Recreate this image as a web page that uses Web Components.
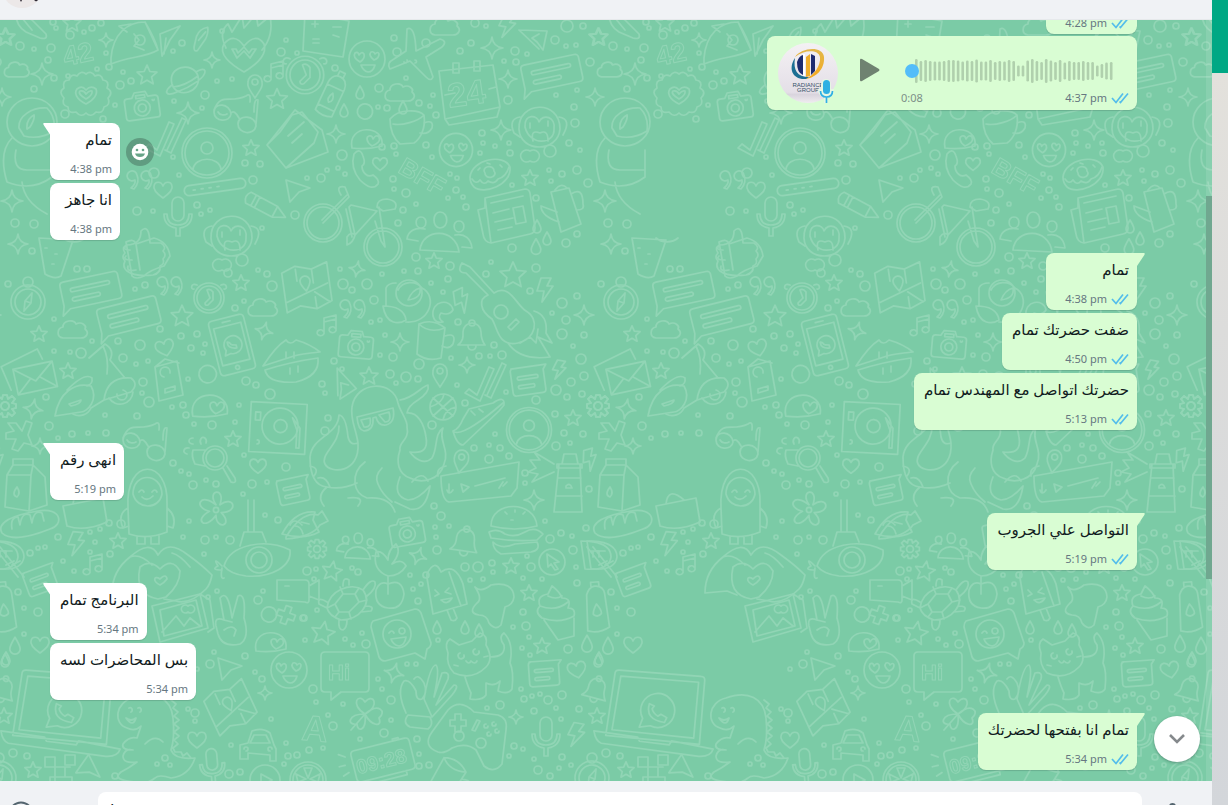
<!DOCTYPE html>
<html lang="en">
<head>
<meta charset="utf-8">
<meta name="viewport" content="width=device-width, initial-scale=1">
<title>Chat</title>
<style>
html,body{margin:0;height:100%;overflow:hidden}
body{font-family:"Noto Sans","Open Sans","DejaVu Sans",sans-serif;color:#111b21}
</style>
</head>
<body>
<chat-app>
  <chat-header slot="header"></chat-header>
  <chat-thread>
    <chat-message dir-out time="4:28 pm" grouped></chat-message>
    <voice-message></voice-message>
    <chat-message tail time="4:38 pm" react>تمام</chat-message>
    <chat-message grouped time="4:38 pm">انا جاهز</chat-message>
    <chat-message dir-out tail time="4:38 pm">تمام</chat-message>
    <chat-message dir-out grouped time="4:50 pm">ضفت حضرتك تمام</chat-message>
    <chat-message dir-out grouped time="5:13 pm">حضرتك اتواصل مع المهندس تمام</chat-message>
    <chat-message tail time="5:19 pm">انهى رقم</chat-message>
    <chat-message dir-out tail time="5:19 pm">التواصل علي الجروب</chat-message>
    <chat-message tail time="5:34 pm">البرنامج تمام</chat-message>
    <chat-message grouped time="5:34 pm">بس المحاضرات لسه</chat-message>
    <chat-message dir-out tail time="5:34 pm">تمام انا بفتحها لحضرتك</chat-message>
  </chat-thread>
  <chat-composer slot="footer"></chat-composer>
</chat-app>
<script>
const mount = (el, html) => { el.attachShadow({mode:'open'}).innerHTML = html; };

customElements.define('chat-app', class extends HTMLElement{
  constructor(){ super(); mount(this, `<style>
    :host{display:grid;grid-template-columns:minmax(0,1fr) 16px;height:100vh}
    main{display:flex;flex-direction:column;min-height:0}
    ::slotted(chat-thread){flex:1;min-height:0}
    aside{display:flex;flex-direction:column}
    .bar{height:73px;background:#00a884}
    .rest{flex:1;background:linear-gradient(#e3e1dc,#dcdcdb 35%,#d3d6da)}
  </style><main><slot name="header"></slot><slot></slot><slot name="footer"></slot></main>
  <aside><div class="bar"></div><div class="rest"></div></aside>`); }
});

customElements.define('chat-header', class extends HTMLElement{
  constructor(){ super(); mount(this, `<style>
    :host{display:flex;align-items:flex-end;height:20px;overflow:hidden;background:#f0f2f5;box-sizing:border-box;border-bottom:1px solid #e6e9eb;padding:0 2px}
    svg{flex:none;margin-bottom:11px}
  </style><svg width="40" height="40" viewBox="0 0 40 40" aria-hidden="true"><circle cx="20" cy="20" r="20" fill="#ece8e8"/><path d="M17 30l2 4 2-4zM32 32l2 1.500 3-2z" fill="#2b2630"/></svg>`); }
});

/* Outline shapes of the wallpaper, each centred on its own origin. */
const S = {
  star:'M0-9L2.600-3.200 9-2.600 4.200 1.800 5.600 8 0 4.800-5.600 8-4.200 1.800-9-2.600-2.600-3.200Z',
  spark:'M0-10Q1-1 10 0Q1 1 0 10Q-1 1-10 0Q-1-1 0-10Z',
  heart:'M0 8C-7 3-10-1-9-4C-8-9-2-9 0-4C2-9 8-9 9-4C10-1 7 3 0 8Z',
  drop:'M0-6C3-1 4 1 4 3A4 4 0 0 1-4 3C-4 1-3-1 0-6Z',
  cloud:'M-10 8C-17 7-16-2-10-3C-10-10 1-11 3-6C9-9 14-4 12-1C17 3 13 8 8 8Z',
  bolt:'M-4-12H6L2-4H8L-3 12L-1 1H-8Z',
  bubble:'M-26-15H28Q32-15 32-11V10Q32 14 28 14H-24L-33 20L-30 10V-11Q-30-15-26-15ZM-18-7H20A2 2 0 0 1 20-3H-18A2 2 0 0 1-18-7ZM-18 3H8A2 2 0 0 1 8 7H-18A2 2 0 0 1-18 3Z',
  note:'M-14-12H18L15-8V10Q15 13 12 13H-12Q-15 13-15 10V-9Q-15-12-12-12M-8-4H8A1.500 1.500 0 0 1 8-1H-8A1.500 1.500 0 0 1-8-4ZM-8 4H4A1.500 1.500 0 0 1 4 7H-8A1.500 1.500 0 0 1-8 4Z',
  cam:'M-14-9H-9L-6-14H5L7-9H14Q17-9 17-6V10Q17 13 14 13H-14Q-17 13-17 10V-6Q-17-9-14-9ZM-5-11H4V-8H-5ZM8 2A8 8 0 1 1-8 2A8 8 0 1 1 8 2ZM4 2A4 4 0 1 1-4 2A4 4 0 1 1 4 2ZM13-5A1 1 0 1 1 11-5',
  clock:'M15 0A15 15 0 1 1-15 0A15 15 0 1 1 15 0ZM12 0A12 12 0 1 1-12 0A12 12 0 1 1 12 0ZM-2-8L1 0L-4 5Q-4 8-1 7L4 2V-6Q1-10-2-8ZM-12-13C-18-16-19-8-15-9M12-13C18-16 19-8 15-9',
  smile:'M18 0A18 18 0 1 1-18 0A18 18 0 1 1 18 0ZM-7 3C-12 0-14-3-12-6Q-9-8-8-4Q-5-8-3-5C-2-2-4 1-7 3ZM7 1C3-2 2-5 4-7Q7-8 8-5Q11-8 12-5C12-2 10 0 7 1ZM-6 6H8Q6 13 1 13Q-4 12-6 6Z',
  pin:'M0 12C-5 4-8 1-7-4A7 7 0 0 1 7-4C8 1 5 4 0 12ZM3-4A3 3 0 1 1-3-4A3 3 0 1 1 3-4Z',
  music:'M-4 6V-8L8-11V3M-4-4L8-7M-4 6A3.500 3 0 1 1-6 4ZM8 3A3.500 3 0 1 1 6 1Z',
  quotes:'M-9 8Q-4 4-5 0A5 5 0 1 1-3-5Q0 2-6 9ZM5 8Q10 4 9 0A5 5 0 1 1 11-5Q14 2 8 9Z',
  gear:'M-2-11H2L3-7L7-10L10-7L7-3L11-2V2L7 3L10 7L7 10L3 7L2 11H-2L-3 7L-7 10L-10 7L-7 3L-11 2V-2L-7-3L-10-7L-7-10L-3-7ZM4 0A4 4 0 1 1-4 0A4 4 0 1 1 4 0Z',
  bell:'M-14 9C-8 4-9 0-9-4A9 9 0 0 1 9-4C9 2 10 5 13 9ZM-4 10A4 4 0 0 0 4 10M3-13A3 3 0 1 1-3-13A3 3 0 1 1 3-13Z',
  mic:'M-6-9A6 6 0 0 1 6-9V3A6 6 0 0 1-6 3ZM-11 2Q-11 13 0 13Q11 13 11 2M-14 2Q-14 14-2 16V24H2V16Q14 14 14 2M-14 2H-11M11 2H14',
  profile:'M25 0A25 25 0 1 1-25 0A25 25 0 1 1 25 0ZM22 0A22 22 0 1 1-22 0A22 22 0 1 1 22 0ZM6-5A6 6 0 1 1-6-5A6 6 0 1 1 6-5ZM-14 16C-12 3 12 3 14 16',
  person:'M-6-29A7 7 0 0 1 2-16A7 7 0 0 1-6-29ZM-15 14C-20-10 18-10 15 12Q0 16-15 14ZM5 12C-1 8-1 3 2 2Q5 1 6 5Q9 0 12 3C14 7 10 10 5 12Z',
  people:'M0-20C9-20 9-4 0-4C-8-4-8-20 0-20ZM-19-15C-12-15-13-4-19-4C-25-4-26-15-19-15ZM19-11C26-11 25 0 19 0C13 0 12-11 19-11ZM-20 18C-18-4 16-5 19 20ZM-22 9L-33 7C-32-1-25-5-15-3M22 15L32 16C31 7 25 1 15 3',
  plane:'M-14-10L14-9L10 10L4 2L-1-2L6-6M-14-10L6 9',
  cursor:'M-12-10L12-2L1 2L-8 12Z',
  compass:'M17 0A17 17 0 1 1-17 0A17 17 0 1 1 17 0ZM13 0A13 13 0 1 1-13 0A13 13 0 1 1 13 0ZM4-9L3 1L-4 9L-3-1ZM-3-1L3 1M5-20A5 5 0 1 1-5-20A5 5 0 1 1 5-20Z',
  phone:'M-14-28H14Q18-28 18-24V24Q18 28 14 28H-14Q-18 28-18 24V-24Q-18-28-14-28ZM-14-20H14V18H-14ZM-4-24H4M2 23A2 2 0 1 1-2 23A2 2 0 1 1 2 23ZM-9 9L-7 4A9 9 0 1 1-3 8ZM-4-4Q-5 3 4 4L4 1L1 0Q-1 0-2-3Z',
  map:'M-22-18L-8-23L8-18L24-23V16L8 22L-8 17L-22 22ZM-22 12L22-2M8 5L22 17M0 3C-3-1-5-4-5-7A5 5 0 0 1 5-7C5-4 3-1 0 3ZM-8-20V-8M8 10V22M8-18V-4',
  planet:'M-13 4C-18-14 8-19 13-4C17 12-8 20-13 4ZM-13 5C-22 12-19 17-8 12C6 7 21-3 20-9C19-12 14-10 11-8M-12 7Q0 6 13-4',
  badge:'M0-20Q5-24 9-18Q15-21 17-14Q24-13 21-6Q28-2 22 4Q25 11 18 13Q17 20 10 18Q5 24 0 19Q-5 24-10 18Q-18 20-18 13Q-25 11-22 4Q-28-2-22-6Q-24-14-17-14Q-15-21-9-18Q-5-24 0-20ZM0 10C-10 5-12-1-9-5Q-4-9 0-4Q5-9 10-5C12 0 8 6 0 10ZM0 5C-5 2-8-1-6-3Q-2-4 0 0Q3-4 6-3Q7 1 0 5Z',
  glasses:'M-22 0C-22-10-6-9-5 2C-6 11-22 10-22 0ZM2 12C2 2 20 3 20 14C18 24 2 22 2 12ZM-5 1Q-2-3 3 6M-22-2C-15-20-6-8 10-16Q15-20 14-10M20 12L22-12Q18-14 18 0M-18 0A6 5 0 0 0-9 2',
  rocket:'M-26 16C-24-8-10-20 8-20C14-10 18-3 21 8C8 16-8 14-26 22ZM-10-10L-18-16L-6-18M8-20L21 8M-3-8L2-2L-3 4L7 8M8-2A5 5 0 1 1-2-2A5 5 0 1 1 8-2Z',
  astro:'M-25 0A25 24 0 1 1 25 0A25 24 0 1 1-25 0ZM-13 6C-14-6 0-15 15-14Q24-5 22 9Q8 18-8 14ZM-5 7Q-6-3 2-7Q3-3-2 5ZM-20 16Q-34 30-25 60Q0 70 20 55V28M-16 28Q-20 48-5 48H20M-10 60Q-8 80 15 92',
  envelope:'M-20-12H20V14H-20ZM-20-12L0 4L20-12M-20 14L-5 1M20 14L5 1M-26 8L-31-17L8-27L11-16',
  bigmail:'M-23 5L5-30L32-10L38 12L-4 28ZM-23 5L-10-8L2-25L12-28L28-8L24 3L-4 28M-2-4L14-18M2 3L12-6',
  pill:'M-26-5H26A5 5 0 0 1 26 5H-26A5 5 0 0 1-26-5ZM-22 0H-20M-14 0H-12M-6 0H-4M2 0H4',
  pencil:'M-20-6H10L22 0L10 6H-20Q-25 0-20-6ZM-14-6V6M-10-6V6M10-6V6',
  thumb:'M-18 0Q-4 0-4-14Q4-22 5-2H16Q22 2 18 6Q22 10 18 14Q20 19 15 21Q16 28 8 30Q-10 32-18 26Q-23 22-20 16Q-24 12-20 8Q-24 2-18 0Z',
  monkey:'M-19 2C-20-26 22-28 22 2C20 26-18 26-19 2ZM-13 0C-14-14 0-12 1-5C5-14 18-10 16 2C17 17-8 20-13 0ZM-8-4V1M10-6V-1M-5 14Q-8 2 2 6Q10 2 10 14M-18-10Q-30-8-24 6L-18 10M21-10Q34-8 25 8M-8 24A6 6 0 1 1-8 34A6 6 0 1 1-8 24ZM12 18A6 6 0 1 1 12 30A6 6 0 1 1 12 18Z',
  airplane:'M-13-26Q-5-30-4-4L20-16Q28-14 22-8L6 2L13 22Q11 27 6 22L-10 6L-30 14Q-34 8-26 4L-14-4ZM-13 5A1.500 1.500 0 1 1-16 7M-5 5A1.500 1.500 0 1 1-5 8',
  calendar:'M-28-22L26-28L33 14L30 24L-18 32L-22 26ZM-22 26L33 14M-22 2L-12 0M-14-30H-8V-20H-14ZM7-32H13V-22H7ZM22-4L29-6',
  cup:'M-20-8C-12-18 8-18 14-12C16 2 10 12 4 16L-10 17C-18 10-20 0-20-8ZM-17-3C-8-1 8-6 13-11M14-4Q24-8 22 1Q18 8 10 6',
  bottle:'M-9-16Q-6-24 0-24Q8-24 9-16L11 18Q0 24-11 20ZM-4-24V-28H4V-24M0-6Q5 1 4 4Q0 8-4 4Q-4 0 0-6Z',
  tube:'M-9-10Q-8-20 0-20Q8-20 9-10V20Q0 24-9 20ZM-3-20V-25H3V-20M-9-8H9M-9 14H9M0-2Q5 5 0 8Q-4 5 0-2Z',
  call:'M-14-14Q-8-21-5-12Q-2-4-6-2C-6 5 0 10 5 7Q12 12 10 16Q4 24-8 12Q-18 0-14-14Z',
  donut:'M-20 4C-18-14 14-20 20-6C22 12-6 22-16 14Q-20 10-20 4ZM-18 6Q-14 12-10 7Q-6 13-2 8Q4 12 8 6Q16 4 19-6M-5 0A5 4 0 1 1 4-2A5 4 0 1 1-5 0M-12-3L-10-5M10-8L12-6M-3-10L0-9',
  bike:'M-13 6A19 19 0 1 1-51 6A19 19 0 1 1-13 6ZM-16 6A16 16 0 1 1-48 6A16 16 0 1 1-16 6ZM47 30A19 19 0 1 1 9 30A19 19 0 1 1 47 30ZM44 30A16 16 0 1 1 12 30A16 16 0 1 1 44 30ZM-32 6L-6-20L-10-30Q-20-32-14-22M-33 3L-8-22M-4-12L22-6L0 18L-6-10ZM-9-8L-3 20M24-10L30 30L26 24L20 4M22-10Q22-18 32-18Q44-16 40-8L28-6ZM-8 20Q-4 14 0 18Q-2 26-8 28Z',
  paper:'M-18-20L22-29Q26-29 27-25L32 10Q32 15 27 16L-12 25Q-19 24-20 16L-25-8L-18-10ZM-18-20L-12 25M-12-15L20-22M-10-5L6-9M-8 4L10 0M-5 12L9 9M10-10L20-12L23 4L13 6Z',
  can:'M-14-18L4-22L16 14L-4 22ZM-10-20Q-4-28 2-22M6-16Q18-24 18-6Q20 0 12 0M-8 2L-24-4Q-24 6-6 12',
  fist:'M-22-16Q-14-20-12-14L6-20Q20-16 22-2L16 8Q2 12-4 18Q-12 22-16 18ZM-22-12Q-26-8-18-8M-22-2Q-26 2-16 2M-20 8Q-22 14-12 12M-12-14L-8 12',
  fries:'M-16-20L18-18L6 18Q0 22-10 16ZM-10-10H-8M0-4H2M-3 6H-1M8-20A14 10 0 0 0 30-20',
  scooter:'M-40 30C-36 6-20-4-4 0C4 14-8 26-14 26ZM-28 4Q-10-14-3-8Q-2-2-8 0M-22 28A13 13 0 0 0-4 22M9 14Q12-10 36-8Q44-2 36 6L9 14ZM14 12A13 13 0 0 0 38 6M22 8A5 5 0 1 0 28 4M-4 22L9 14M12-12Q14-28 8-40L-6-28L10-42Q20-36 15-26L30-8M-26 18L-14 14Q-14 18-24 20Z',
  lips:'M-27 8Q-14-12-4-18Q0-12 6-18Q20-14 30-6Q10-4 4-2ZM-25 12Q0 4 28 0Q30 18 6 24Q-22 26-25 12ZM-4 0V-6M4 0V-6M0 10V16M8 8V14',
  card:'M-14-14L8-20L14 14L-10 20ZM-14-14L-4-22L10-18M-5-4A5 5 0 1 1 1-8M-4 8L6 5V9L-4 12Z',
  turntable:'M-28-24H28V26H-28ZM20-1A18 18 0 1 1-16-1A18 18 0 1 1 20-1ZM9-1A6 6 0 1 1-4-1A6 6 0 1 1 9-1ZM-23-14H-18V-6H-23ZM-20 14A2 2 0 1 1-20 18M14-10L22 0V20H19V2Z',
  spin:'M-12-12H-4L2-4L6-14L12-12L8 0L12 10L4 8L-2 16L-8 14L-4 4L-14 4L-14-2L-6-4Z',
  magnify:'M12 0A12 12 0 1 1-12 0A12 12 0 1 1 12 0ZM9 0A9 9 0 1 1-9 0A9 9 0 1 1 9 0ZM8 10L16 24Q22 26 20 20L12 8M-10-8L-22-8Q-24-2-20 6L-10 8M-22-14A4 3 0 1 1-22-20M-14-14A3 4 0 1 1-9-15M-28-4A4 3 0 1 1-26-10',
  carton:'M-18-12L-12-22H8L20-10L22 18L4 24L-20 20ZM-18-12H6L4 24M6-12L8-22M-12-22V-28H8V-22M-8 0Q-4 6-8 10Q-14 8-8 0Z',
  penguin:'M-19 16C-22-36 22-34 20 12V40Q0 48-18 42ZM-14 2C-14-20 14-20 15 2C12 18-10 18-14 2ZM-8 0Q-5-4-3 0M5 0Q8-4 10 0M-5 5Q0 10 6 4M-19 16Q-30 22-24 36L-18 34M20 16Q30 24 26 36L20 34M-10 44V52H-2V45M4 45V52H12V43',
  flower:'M0-4C-8-16 8-18 3-4C14-12 18 2 4 2C14 12 0 16 0 4C-8 16-18 8-5 1C-18-2-12-14 0-4ZM2 0A2 2 0 1 1-2 0A2 2 0 1 1 2 0Z',
  bird:'M-22-4V-14Q-20-19-12-19M-10-12A14 13 0 0 1 14-14C30-6 22 22-2 20M14-9A13 13 0 1 1-12-9A13 13 0 1 1 14-9ZM-25 4C-22 24-8 22-2 18Q-4 4-25 4ZM-22-4V4M0-2Q4-12 12-14Q14-4 0-2Z',
  croissant:'M-10 4C-12-12 8-14 10-2Q6 4-2 1Q-6 6 0 10Q-8 12-10 4Z',
  guitar:'M-50-62L-42-58L-18-32C-2-42 4-20 14-14C28-6 24 14 6 18C-14 22-14 4-20-6C-32-14-34-26-24-30L-46-52Q-56-52-50-62ZM-4-13A7 7 0 1 1-18-13A7 7 0 1 1-4-13ZM-4 2L4-6L7-3L-1 5ZM22-14Q36-10 34 8L40 18L26 12L38 32Q8 36-4 18M8 18L18 12L24 18L26 4',
  mug:'M-14-16Q0-22 12-12L8 18Q-6 22-16 14ZM-14-16Q-4-6 12-12M12-4Q24-8 20 4Q16 10 9 6',
  ticks:'M-20 8L-16 4L-8 10L4-18L9-16L-5 16ZM2 10L17-22L21-20L6 13L0 10',
  ball:'M13 0A13 13 0 1 1-13 0A13 13 0 1 1 13 0ZM-10-9L10 9M10-9L-10 9M-13 0Q0-4 1-13M0 13Q2 2 13 0',
  shoe:'M-26 6Q-20 4-16-6L-10-16L14-22Q26-30 25-20L20-14L-16 20Q-22 20-26 6ZM-26 6Q-18 14 24-22M-8-14L-4-10M0-16L4-13',
  octopus:'M-20 3C-22-12-28-20-26-33C-22-60 16-60 20-37C22-28 30-20 29-13C32 0 20 2 22 10C18 22 20 34 32 38C44 44 62 40 66 24C72 10 60 0 65-12C56-6 60 8 54 18C46 26 36 18 32 12C46 14 50 8 48-3C46-16 40-28 29-27Q30-34 40-40Q52-48 50-55C44-54 36-42 22-40M-20 3Q-28 6-30-3Q-32-24-39-25C-40-4-66-4-68 17C-68 34-64 46-51 47Q-36 50-21 43M-39-14C-38 4-58 14-53 24C-48 34-18 34-20 3M22 37Q14 56 30 60Q40 60 52 46Q48 72 32 69L17 62M-13 22Q-24 30-23 43Q-22 54-11 58Q12 56 17 72M4 28Q-4 36 0 44Q4 54 14 62M-51 47Q-62 56-54 66M-30 58Q-12 56-20 66M-21-23L15-32Q18-18 8-15Q0-14-2-23L-5-22Q-4-10-14-9Q-20-10-21-23ZM-17-20L-8-22Q-6-12-14-13ZM1-25L11-28Q14-18 7-18ZM-60 38Q-52 36-48 47M-68 26Q-58 28-64 36M60 36Q58 28 68 26M34 42Q44 30 50 41',
  voice:'M-38-14L40-28L38-2L32 6L-30 12Q-38 10-38-14ZM-30-6V2M-32 0Q-30 6-26 0M-18-6L-10-3L-16 2ZM-4-4L26-12M20-2L24-8M24-4L28-8',
  light:'M-9-18H12L14 30H-14ZM-11-18H14V-14H-11ZM-6-18L-4-28H8L10-18M-10-4H13M-12 14H14M-2 4Q2 0 4 6H-2ZM-14-18L-34-30L-28-22L-38-22L-32-14L-40-10L-30-8L-36 0L-14-10',
  bread:'M-28 8C-34-2-18-10 8-14C32-18 34 0 20 4C0 12-20 16-28 8ZM-18 4Q-20-8-12-8L-10 0Q-8-14 0-10L2-2Q4-16 12-12L14-4',
  bag:'M-22-6L18-14L22 10Q0 20-18 14ZM-12-8Q-10-26 6-12',
  leaf:'M-14-16Q16-16 16 0Q14 14-10 12ZM-8-10L16 20M-4-6H4M-2 0V-6M4 8L12 4',
  hands:'M-48 18Q-48-4-30-18Q-10-36-2-20Q8-36 28-20Q42-10 52 0Q50 10 46 14Q30 30 16 26L4 24M-20-8Q-10-16 0-6Q12-18 20-4Q20 10 6 22L-2 24Q-26 20-20-8ZM0 10C-8 6-6 0 0 4Q6-2 7 4Q4 8 0 10ZM-30-18Q-20-22-8-10M12-22Q20-20 30-8M-48 18L-26 16L-16 20',
  sub:'M-34 6C-28-16 8-22 32-10C34 6 14 18-12 16Q-28 14-34 6ZM14 0A13 13 0 1 1-12 0A13 13 0 1 1 14 0ZM9 0A8 8 0 1 1-7 0A8 8 0 1 1 9 0ZM-18-14L-14-28H4L8-18M-10-28V-60M-4-28V-60M-36 6Q-46-4-40 6Q-48 10-36 10M-36 8Q-38 20-34 18',
  fish:'M-15 8Q-2-16 18-14L16-6L22 6Q8 14-15 8ZM-2 0Q4 0 6 8M4-4L12-2',
  picture:'M-28-14L20-26L28 8L-20 22ZM-20-10L16-20L22 6L-16 16ZM20-26L30-20L34 8L28 12M-18 12L-4-4L4 6L10-2L20 6M8-14A4 4 0 1 1 8-8A4 4 0 1 1 8-14Z',
  victory:'M-16 4Q-18-6-8-2L-12-24Q-4-34 0-4L6-26Q14-30 12-4Q18 16 8 22Q-10 26-14 12ZM-8-2L0 0M-8 8Q0 2 4 8L2 14',
  plus:'M-3-9H3V-3H9V3H3V9H-3V3H-9V-3H-3Z',
  video:'M-16-10H12Q16-10 16-6V10Q16 14 12 12L-16 10ZM16-4L26-10V10L16 6ZM-8-4H-4',
  laptop:'M-42-36Q-42-40-38-40L44-38Q48-38 48-34L46 30L-48 26ZM-36-34L42-32L40 24L-42 20ZM-60 22L-16 26L-14 30L16 32L18 28L60 34Q58 42 46 42L-52 34Q-58 32-60 22ZM-15 16L-12 7A17 17 0 1 1-4 14ZM-6-8Q-10 8 10 10L12 5L6 2L3 4Q-2 1-3-3L-1-6Z',
  dino:'M-14-12Q-20-6-28-10C-42-14-40-36-22-40C0-48 16-40 18-20Q20 0 16 12Q20 22 40 20Q34 38 16 40Q4 36 0 40Q-10 48-20 44Q-44 42-34 34Q-26 30-18 24Q-32 26-32 18Q-30 10-22 12Q-34 12-32 6Q-26-2-18 0ZM-26-30A2 2 0 1 1-24-26M-17-30A2 2 0 1 1-15-26M-29-20Q-24-16-19-20Q-22-10-29-20ZM-10 6Q0-4 8 4M16-38L21-34L18-30L23-26L19-22L24-18L19-14L24-10L19-6L24-2L19 2L23 6L18 10L20 14L26 14L28 18L32 15L36 20',
  car:'M-18 14V0L-10-2L-6-14Q4-18 12-12L16 0L18 4V16H12V10L-10 8V14ZM-8-2H12L8-10H-4ZM-14 4A2 2 0 1 1-12 6M12 6A2 2 0 1 1 14 4',
  boxes:'M-15-10H-5V0H-15ZM5-12H15V-2H5ZM-5 0H5V10H-5ZM-10 10H-5V16H-10ZM5 0H10M5 10H12V16',
  citrus:'M18 0A18 18 0 1 1-18 0A18 18 0 1 1 18 0ZM15 0A15 15 0 1 1-15 0A15 15 0 1 1 15 0ZM0-2L-4-12H4ZM2-1L12-6L10 2ZM-2-1L-12-6L-10 2ZM0 2L-6 11L6 11Z',
  play:'M15 0A15 15 0 1 1-15 0A15 15 0 1 1 15 0ZM-4-6L7 0L-4 6Z',
  whale:'M-20 12Q-4-14 12-10L16-14L22-4L14 0Q6 12-20 14ZM-4 0Q-12-8-16 0',
  burger:'M-24-4C-24-30 20-30 22-4Q0 2-24-4ZM-26 2Q-18-2-10 4Q0 8 10 2Q20-4 28 4L22 10Q0 12-24 8ZM-22 12Q-14 20 0 14L22 12Q26 20 16 22L-14 24Q-22 20-22 12ZM-10-18L-8-16M0-20V-18M8-16L10-18M-4-10H-2',
  ptr:'M13 0A13 13 0 1 1-13 0A13 13 0 1 1 13 0ZM-5-8L7 0L2 1L6 7L3 8L-1 2L-4 5Z',
  cherry:'M0 4Q-16-2-12-20Q-6-22 0-12Q0-22 8-28Q14-20 4-8Q14-14 18-6Q12 4 0 4M0 4V22M0 12Q14 6 16 22Q14 38 0 36Q-14 34-12 18Q-8 8 0 12Z',
  turtle:'M-20 6C-18-12 4-20 16-12C26 2 12 18-6 18Q-18 14-20 6ZM-12 2L-4-8L8-8L12 0L2 10L-8 10ZM-12 2L-20 6M-4-8L-7-15M8-8L12-14M12 0L20-2M2 10L4 17M-8 10L-12 15M-4-16Q-4-26 2-22L2-17M16-12Q24-24 28-20Q30-14 20-6M-8 18Q-9 28-4 28Q0 26 0 18M-20 0Q-30-6-28 2L-20 6M18 4Q28 4 24 9L14 10',
  popsicle:'M-20-18Q-12-34-6-20Q8-30 16-8L20 12L-14 22L-20-14ZM2-20L14 14M-12-2L-8 2L-12 4M2-4L-2 0L4 2M-6 8Q0 14 5 6ZM0 18L4 28Q8 30 10 26L6 16',
  splat:'M-18-20Q-12-14-2-22Q20-26 21-10Q20-2 12 0Q10 10 8 18Q2 24-4 16Q-6 8-14 8Q-26 6-16-4Q-10-8-18-20Z',
  cupcake:'M-14 6Q-22 0-16-6Q-20-16-8-18L-4-26Q4-20 6-14Q16-14 12-4Q20-4 18 4Q4 12-14 6ZM-12 8L2 28L18 24V6M-16-6Q0 0 12-10M-8-16Q0-12 6-16',
  emojibub:'M-28-14L14-26Q18-26 20-22L30 8Q30 12 26 14L24 24L14 18L-16 26Q-20 26-22 22L-30-8Q-30-12-28-14ZM10-1A14 14 0 1 1-18-1A14 14 0 1 1 10-1ZM-12-2Q-9-6-7-2M4-4A3 3 0 1 1-2-4A3 3 0 1 1 4-4ZM-10 4L5 2Q4 10-2 11Q-8 10-10 4Z',
  cat:'M-32-14Q-36-24-30-28L-21-22L-8-26L0-34Q8-32 6-22Q14-8 6 0Q-8 14-26 6Q-34-2-32-14ZM-16-12A3 3 0 1 1-20-14M-1-16A3 3 0 1 1-5-18M-14-6Q-11-2-9-6Q-5-2-3-6M-26-2L-22-1M4-10L8-11M-15 10Q-12 20-9 26L-10 32Q2 34 6 28V16Q14 20 20 14L18 24Q28 28 32 22Q34 4 30-4Q34-24 24-34Q18-30 24-22Q26-10 10-10',
  hi:'M-20-24H20Q24-24 24-20V12Q24 16 20 16H-4L-14 24V16H-20Q-24 16-24 12V-20Q-24-24-20-24Z',
  clover:'M0 0C-16-10-6-22 0-12C8-22 16-8 0 0C14-12 22-2 14 4C18 14 6 12 0 0C2 18-8 18-8 10C-18 12-18 0 0 0L-14 16',
  ok:'M-22 14Q-32-8-24-18Q-18-20-12-8Q-12 2-6 0Q0-6-4-16Q-10-26-14-20M-4 0Q2-34 8-34Q12-30 6-2L14-26Q22-28 20-20L8 6L26-14Q32-14 24-4L4 18ZM-20 16L2 18Q6 26 0 30L-18 28Q-26 24-20 16Z',
  pad:'M-32 14Q-48 8-38-6L-22-28Q-10-40 4-26L28-23Q38-20 36-8L32 26Q24 36 14 28L6 12Q-4 4-18 10Q-26 16-32 14ZM-20-18H-15V-24H-9V-18H-4V-12H-9V-6H-15V-12H-20ZM-6-2A5 5 0 1 1-16-2A5 5 0 1 1-6-2ZM16 5A5 5 0 1 1 6 5A5 5 0 1 1 16 5ZM2-8L7-18L10-17L5-7ZM18-12A2 2 0 1 1 16-14M26-14A2 2 0 1 1 24-16M29-7A2 2 0 1 1 27-9M21-4A2 2 0 1 1 19-6',
  digital:'M-26-16H26Q30-16 30-12V12Q30 16 26 16H-26Q-30 16-30 12V-12Q-30-16-26-16ZM-22 16V20H20V16M14-16V-18H20V-16M-36-12L-42-16M-38-4H-44M-36 4L-42 6',
  flame:'M-18-2Q-26-18-16-26L-12-18L-2-34L0-22L12-36L14-24L26-34Q30-14 18 0M0 22C-14 14-26 4-20-6Q-10-18 0-4Q12-18 20-6C24 6 10 16 0 22ZM-12-1L-7 8L0 1L6 8L12-1L8-1L5 3L0-3L-6 3L-8-1Z',
  brush:'M-16-14Q-8-14 0-8L14 6Q16 12 8 10L-6 4Q-16-2-16-14ZM-10-10L0 2',
  wedge:'M-6 14L-8-8L12-16L2-2ZM-4 12L-2-4',
  ticket:'M-20-20L24-12L18 24L-22 18ZM-10-12V-6M-13-9H-7M8-6H16M-12 6H-6M-12 10H-6M8 2L14 4'
};
/* name, x, y, rotation, scale percent */
const ITEMS = `star 5 37;brush 32 28;star 72 23;spark 106 40 0 70;rocket 137 42;wedge 168 42;brush 200 40 80 70;flame 244 50;spark 212 60 0 80;cloud 17 70 0 85;spark 42 74 0 110;planet 185 80;star 147 75 0 110;badge 86 94;cam 142 106 -8;glasses 236 112;music 275 72;pin 255 86;bigmail 290 140;star 277 99 0 115;spark 188 113 0 110;astro 32 122;profile 207 153;star 251 148 0 90;ticks 165 140;pill 215 187 -8;pencil 266 207 28;mic 178 212;monkey 230 236;thumb 145 245;heart 163 190;quotes 140 180;cursor 298 190;spark 12 201 0 110;spark 18 244;fries 55 258;ticket 325 33;clock 305 75 0 125;smile 367 59;airplane 420 55;cloud 445 27;bolt 507 26 10;plane 533 40;spark 492 48 0 110;spark 508 79 0 90;spark 501 130;spark 336 134 0 90;spark 595 97 0 90;star 599 37;bubble 551 74 -12 95;tube 332 95 25;drop 360 92;drop 344 110;drop 403 107;cloud 400 93;calendar 467 93;cup 410 127;person 367 134;smile 456 150 0 92;call 368 168;heart 380 164 0 80;donut 490 173;monkey 538 127;star 530 178 0 90;bike 355 217;people 440 232;paper 503 218;can 565 210;drop 537 226;drop 536 246 0 120;drop 547 238;compass 28 302;bubble 90 291 -12 95;bubble 128 317 -14 98;quotes 170 286;clock 209 298;star 241 283 0 90;star 182 316 0 120;star 39 334 0 90;star 68 371 0 90;star 233 439 0 90;cloud 263 308;cloud 73 330;phone 232 345 -14;spark 264 331 15 90;lips 290 358;map 306 288 -8;fist 148 258;scooter 95 386;envelope 35 377 -12;heart 165 348 -15;heart 258 466 0 90;card 169 381;person 210 400 0 115;turntable 278 427 3;gear 5 406;spark 33 409 10;spark 40 446 0 80;spin 20 435;glasses 145 440;magnify 215 458;carton 25 487;penguin 147 492;note 293 490 -12;flower 216 510 0 130;spark 357 269 10 80;spark 400 342 0 90;spark 467 365 0 80;spark 584 315;spark 534 500;star 434 261 0 90;star 513 275 0 145;star 369 376;star 573 418 0 90;bird 408 302;croissant 443 312;bolt 462 301 -25;bolt 545 290;bolt 559 370 10 80;bolt 590 460 -15 90;guitar 512 325;mug 433 340;bell 472 336;cam 356 345 5;music 328 326;quotes 353 309;plane 340 385 45;pin 440 375;pin 461 461 10;ticks 485 385;note 528 380 -8 110;ball 443 407;shoe 479 425;profile 529 430 0 90;gear 598 406;octopus 378 440;voice 479 490;light 568 482;bread 30 525;bag 85 512;bolt 76 544 5;star 118 541 0 90;leaf 8 557;note 40 580 -20;music 94 565;hands 160 575;sub 258 560;fish 297 526;drop 15 645 0 130;drop 5 660;heart 40 645;picture 180 620;victory 232 622;person 271 637;plus 286 615 20;video 293 590;smile 289 670;cursor 230 668;map 230 708 -25 95;spark 265 693 0 70;laptop 62 712 3;dino 155 738;heart 197 740;car 258 745;mic 212 762 -5 90;star 33 770 0 90;boxes 60 767;cursor 90 770 45;play 265 780;citrus 308 780;whale 306 525;people 358 546 0 65;gear 317 549 0 85;cam 407 532 -10;bell 465 542 8;burger 515 530;ptr 552 562;star 332 571 10 110;star 511 566 0 90;star 529 593 0 90;star 542 646 0 90;star 323 633 10 130;star 597 716 0 90;spark 418 556 20 90;spark 394 673 15;spark 516 717 0 70;cherry 388 572;turtle 347 602;popsicle 447 592;splat 493 607;cupcake 556 612;bottle 597 610 -5;emojibub 401 635;drop 437 627;drop 465 627;drop 479 630;drop 587 643 0 130;drop 599 658;cat 480 667;hi 345 676;clover 365 714;ok 428 699;pad 470 738;note 544 673 -4;heart 577 670 -12;bell 596 690 15 90;mic 546 732;bolt 576 735 10;digital 383 760 -14;mug 450 778 25;compass 592 778;leaf 595 557`;
const DOTS = `53 22 3 20 46 4 34 49 2 51 48 4 56 28 2 70 35 4 84 32 2 92 28 3 101 23 3 48 60 3 106 53 2 97 69 2 109 67 3 123 72 2 54 78 3 34 89 3 68 76 2 120 85 4 131 81 3 65 114 4 103 119 3 115 105 2 182 43 3 173 51 2 222 31 2 217 81 2 232 79 2 281 52 4 286 40 2 297 53 2 205 95 4 202 108 2 174 101 2 154 173 5 173 157 2 179 175 2 245 163 3 260 164 3 253 180 4 137 211 4 153 211 2 295 215 4 262 228 2 197 205 3 201 214 2 210 210 2 15 223 4 34 224 4 32 251 3 394 38 3 426 43 4 397 52 4 471 43 3 460 51 3 475 23 4 486 26 2 567 26 6 583 26 3 555 40 4 515 51 4 527 54 2 566 46 2 576 45 2 504 61 2 516 62 3 335 68 3 406 78 2 379 88 4 378 107 2 387 108 3 419 103 3 430 106 2 433 95 2 436 115 3 508 100 4 556 95 2 590 62 4 577 90 2 574 107 3 575 123 4 482 133 3 483 143 2 495 146 2 509 143 2 510 153 3 480 153 2 569 143 3 580 150 2 426 145 3 394 146 3 382 147 3 396 154 2 432 157 2 342 155 5 327 170 2 321 178 4 307 178 2 338 168 2 345 174 2 393 179 3 406 193 4 394 189 2 450 174 2 457 178 2 456 190 3 448 198 2 463 197 2 466 207 3 403 210 3 416 204 2 398 223 3 549 170 2 562 174 3 577 170 4 512 185 2 551 181 2 588 183 4 536 198 3 566 243 4 577 234 3 512 248 4 8 284 3 77 269 3 87 269 3 135 289 2 145 285 3 235 308 3 228 273 4 244 301 2 258 270 2 267 274 3 272 286 5 160 329 3 181 336 3 197 334 3 191 348 3 205 344 2 203 353 2 140 345 5 118 341 3 92 341 2 81 353 5 70 352 2 54 351 2 54 319 2 123 358 4 136 364 2 148 361 2 143 382 4 142 393 2 149 402 5 172 407 2 183 405 3 188 379 2 246 381 4 256 385 3 270 394 5 239 405 2 186 415 3 194 424 2 212 425 4 235 422 2 137 416 3 105 415 2 106 433 3 88 433 2 72 434 3 49 426 4 46 397 3 58 438 2 173 463 3 181 471 2 189 474 2 193 485 4 206 480 2 216 484 3 244 455 2 252 484 4 243 494 2 267 482 2 286 467 4 343 284 5 367 284 5 352 290 3 374 300 4 340 269 2 416 257 4 404 271 2 418 271 3 382 274 2 450 266 4 431 283 2 443 292 2 486 274 3 491 262 2 448 279 3 536 268 4 530 291 3 562 303 5 566 320 4 562 334 5 577 296 3 584 335 3 552 313 2 573 346 2 371 322 2 380 320 2 385 335 2 393 357 4 419 364 5 380 355 2 334 361 3 342 369 2 390 374 4 406 377 5 418 379 3 396 383 2 451 358 2 458 322 3 494 345 3 479 356 3 490 356 2 502 355 4 581 359 5 584 376 4 571 382 4 556 390 5 567 397 3 582 394 3 506 392 2 536 400 4 465 403 3 457 385 2 432 425 4 322 384 3 325 393 2 328 418 3 325 431 4 555 414 3 564 433 3 556 446 4 570 443 2 583 434 3 495 434 2 474 448 3 489 445 2 500 448 3 509 456 3 489 459 4 525 473 3 525 483 2 589 489 3 434 506 3 38 548 2 45 547 2 58 537 3 90 532 2 100 529 2 109 523 3 121 524 4 63 561 2 95 542 2 90 552 2 110 554 3 74 571 2 18 592 3 30 553 3 24 608 2 38 612 4 24 634 2 205 540 4 216 537 2 230 540 4 189 521 2 183 537 2 278 520 3 265 515 2 204 554 2 217 591 2 208 597 2 258 600 4 263 591 2 304 618 3 245 656 3 210 664 4 214 652 2 197 669 2 255 672 2 262 679 3 271 719 2 195 713 4 195 721 2 188 709 2 13 753 4 27 756 3 165 758 3 170 765 2 157 764 2 115 776 3 229 774 4 240 772 3 231 745 2 286 743 2 288 756 3 297 755 3 284 764 2 307 571 4 316 569 2 314 579 2 303 618 3 317 610 2 305 640 2 352 568 2 358 572 3 410 575 2 426 575 3 421 584 2 413 589 2 418 601 3 345 639 2 353 645 2 366 644 4 362 633 2 437 550 4 436 537 2 435 527 2 449 526 2 441 516 4 465 567 4 478 567 5 492 563 3 493 572 2 483 579 2 470 580 2 531 567 4 527 556 2 523 578 2 542 579 2 577 583 3 550 539 4 561 533 3 572 536 2 576 567 2 573 550 4 545 521 2 586 528 3 523 612 3 526 626 4 513 627 2 529 637 2 522 648 2 568 649 4 530 655 2 438 640 2 416 664 2 407 664 2 313 689 4 378 679 2 382 689 2 391 700 4 316 702 2 343 704 2 328 715 2 333 726 4 384 733 4 391 720 2 309 750 3 323 748 2 360 739 2 417 739 3 419 754 2 429 765 3 419 766 3 487 708 2 500 705 4 521 689 2 524 699 3 532 696 2 540 694 2 548 700 4 562 695 4 579 709 3 534 711 3 556 708 2 561 719 2 514 746 3 523 749 2 509 756 2 534 759 2 538 770 4 550 776 3 562 757 3 559 768 2 571 765 2`.split(' ').map(Number);

customElements.define('doodle-wallpaper', class extends HTMLElement{
  constructor(){ super();
    let tile = ITEMS.split(';').map(row => {
      const [name,x,y,r=0,s=100] = row.split(' ');
      return `<path d="${S[name]}" transform="translate(${x} ${y}) rotate(${r}) scale(${s/100})"/>`;
    }).join('');
    for(let i=0;i<DOTS.length;i+=3) tile += `<circle cx="${DOTS[i]}" cy="${DOTS[i+1]}" r="${DOTS[i+2]}"/>`;
    tile += `<g font-family="Liberation Sans" font-weight="bold" text-anchor="middle">
      <text transform="translate(80 63) rotate(-12)" font-size="27">42</text>
      <text transform="translate(468 105) rotate(-8)" font-size="34">24</text>
      <text transform="translate(418 184) rotate(30)" font-size="25">BFF</text>
      <text x="339" y="680" font-size="22">Hi</text>
      <text transform="translate(314 741) rotate(5)" font-size="36">A</text>
      <text transform="translate(383 768) rotate(-14)" font-size="20">09:28</text></g>`;
    mount(this, `<style>
      :host{display:block}
      svg{display:block;width:100%;height:100%}
      path,circle,text{fill:none;stroke:#91d5b5;stroke-width:1.700px;stroke-linejoin:round;stroke-linecap:round;vector-effect:non-scaling-stroke}
      text{stroke-width:1px}
    </style><svg aria-hidden="true"><defs><pattern id="tile" patternUnits="userSpaceOnUse" x="0" y="-20" width="593" height="800">${tile}<g transform="translate(-593 0)">${tile}</g><g transform="translate(593 0)">${tile}</g></pattern></defs><rect width="100%" height="100%" style="fill:url(#tile)"/></svg>`);
  }
});

customElements.define('chat-thread', class extends HTMLElement{
  constructor(){ super(); mount(this, `<style>
    :host{display:block;position:relative;overflow:hidden;background:#7bcba6}
    doodle-wallpaper{position:absolute;inset:0}
    .list{position:relative;box-sizing:border-box;height:100%;display:flex;flex-direction:column;justify-content:flex-end;padding:0 75px 11px 50px}
    .track{position:absolute;top:0;right:0;bottom:0;width:6px;background:rgba(255,255,255,.1);display:grid;grid-template-rows:176fr 383fr 202fr}
    .track i{grid-row:2;background:#70a890}
    button{position:absolute;right:12px;bottom:19px;width:46px;height:46px;border:0;border-radius:50%;background:#fff;padding:0;display:grid;place-items:center;box-shadow:0 1px 3px rgba(11,20,26,.3)}
  </style><doodle-wallpaper></doodle-wallpaper><div class="list"><slot></slot></div><div class="track"><i></i></div>
  <button aria-label="Scroll to bottom"><svg width="18" height="12" viewBox="0 0 18 12"><path d="M2 2l7 7 7-7" fill="none" stroke="#85898c" stroke-width="2.600"/></svg></button>`); }
});

const TICKS = `<svg class="ticks" width="18" height="12" viewBox="0 0 18 12" aria-hidden="true"><path d="M1 6l4 4.500L12 1.500M8.500 9.500l1 1L17 1.500" fill="none" stroke="#53bdeb" stroke-width="1.700"/></svg>`;

customElements.define('chat-message', class extends HTMLElement{
  connectedCallback(){
    if(this.shadowRoot) return;
    const out = this.hasAttribute('dir-out');
    mount(this, `<style>
      :host{display:flex;flex:none;align-items:center;margin-top:13px}
      :host([grouped]){margin-top:3px}
      :host([dir-out]){justify-content:flex-end}
      .bubble{position:relative;box-sizing:border-box;min-width:70px;height:57px;padding:3px 8px 2px 10px;border-radius:8px;background:#fff;box-shadow:0 1px 1px rgba(11,20,26,.15);display:flex;flex-direction:column;justify-content:space-between}
      :host([dir-out]) .bubble{background:#d9fdd3;min-width:91px}
      :host([tail]:not([dir-out])) .bubble{border-top-left-radius:0}
      :host([tail][dir-out]) .bubble{border-top-right-radius:0}
      .tail{position:absolute;top:0;left:-7px}
      :host([dir-out]) .tail{left:auto;right:-8px;transform:scaleX(-1)}
      p{margin:0;height:26px;font-size:15px;line-height:26px;white-space:nowrap;text-align:right;direction:rtl}
      footer{display:flex;justify-content:flex-end;align-items:center;gap:4px;font-size:11px;line-height:18px;color:#667781}
      button{width:28px;height:28px;margin-left:6px;padding:0;border:0;border-radius:50%;background:rgba(70,110,92,.5);display:grid;place-items:center}
    </style><div class="bubble">${this.hasAttribute('tail')?`<svg class="tail" width="8" height="13" viewBox="0 0 8 13" aria-hidden="true"><path d="M1 0H8V13L1 2.500Q-.5 0 1 0Z" fill="${out?'#d9fdd3':'#fff'}"/></svg>`:''}
    <p><slot></slot></p><footer><time>${this.getAttribute('time')}</time>${out?TICKS:''}</footer></div>
    ${this.hasAttribute('react')?`<button aria-label="React"><svg width="18" height="18" viewBox="0 0 18 18"><circle cx="9" cy="9" r="8.300" fill="#fff"/><circle cx="6" cy="7" r="1.300" fill="#67a488"/><circle cx="12" cy="7" r="1.300" fill="#67a488"/><path d="M4 10.500h10q-1 3.500-5 3.500t-5-3.500z" fill="#67a488"/></svg></button>`:''}`);
  }
});

customElements.define('voice-message', class extends HTMLElement{
  constructor(){ super();
    const h = [24,20,22,20,19,19,20,22,22,21,19,21,20,23,19,19,22,18,20,19,22,20,11,11,21,24,20,18,24,21,18,22,17,20,18,18,20,18,18,11,14,17,18];
    mount(this, `<style>
      :host{display:flex;flex:none;justify-content:flex-end;margin-top:2px}
      .bubble{box-sizing:border-box;width:370px;height:74px;padding:6px 8px 3px 10px;border-radius:8px;background:#d9fdd3;box-shadow:0 1px 1px rgba(11,20,26,.15);display:flex}
      .logo{flex:none;margin-right:19px}
      button{flex:none;width:24px;height:56px;padding:0;border:0;background:none;display:grid;place-items:center;margin-right:19px}
      .right{flex:1;display:flex;flex-direction:column;justify-content:space-between}
      .wave{display:flex;align-items:center;height:26px;padding:16px 0 0 4px;position:relative}
      input{position:absolute;inset:15px auto auto 0;width:212px;height:26px;margin:0;opacity:0}
      .dot{flex:none;width:14px;height:14px;border-radius:50%;background:#53bdf9;margin-right:-4px;z-index:1}
      .bars{flex:none;display:block}
      footer{display:flex;align-items:center;font-size:11px;line-height:18px;color:#667781;gap:4px}
      .len{margin-right:auto;color:#7d8f88}
    </style><div class="bubble">
    <svg class="logo" width="62" height="62" viewBox="0 0 62 62" role="img" aria-label="Radiance Group">
      <defs><linearGradient id="g" x2="0" y2="1"><stop stop-color="#f4f1f4"/><stop offset=".82" stop-color="#e4dfe7"/><stop offset=".86" stop-color="#d9d4dd"/><stop offset="1" stop-color="#efedf0"/></linearGradient><linearGradient id="y" x2="0" y2="1"><stop stop-color="#e2b84c"/><stop offset="1" stop-color="#f5a91e"/></linearGradient></defs>
      <circle cx="31" cy="31" r="30" fill="url(#g)"/>
      <path d="M18 15C25 5 46 4 47 15C48 27 39 36 28 37C37 34 44 23 43 15C41 7 27 8 18 15Z" fill="url(#y)"/>
      <path d="M18 16C11 26 15 38 29 37L32 35C20 35 16 28 18 16Z" fill="#1c6f93"/>
      <path d="M20 20Q22 14 26 13V33Q20 31 20 20ZM34 12L38 14V29L34 33Z" fill="#1e2c70"/><path d="M29 15L33 12V34L29 35Z" fill="#f0ae2c"/><path d="M26 12h2v22h-2z" fill="#fff"/>
      <text x="31" y="45" text-anchor="middle" font-family="Liberation Sans" font-size="6" fill="#355066">RADIANCE</text><text x="31" y="50" text-anchor="middle" font-family="Liberation Sans" font-size="6" fill="#355066">GROUP</text>
      <path d="M44 43q0-6 5-6t5 6v4h3q0 7-6 8v6h-4v-6q-6-1-6-8h3z" fill="#e6f7e4"/>
      <rect x="46" y="38" width="7" height="14" rx="3.500" fill="#2fb0e3"/><path d="M43.500 49q0 6 6 6t6-6M49.500 55v6" fill="none" stroke="#2fb0e3" stroke-width="1.700"/>
    </svg>
    <button aria-label="Play"><svg width="22" height="24" viewBox="0 0 22 24"><path d="M1 2Q1 0 3 1L20 11Q21 12 20 13L3 23Q1 24 1 22Z" fill="#6f8271"/></svg></button>
    <div class="right"><div class="wave"><i class="dot"></i><svg class="bars" width="200" height="26" aria-hidden="true">${h.map((v,i)=>`<rect x="${(i*4.64).toFixed(1)}" y="${13-v/2}" width="2.600" height="${v}" rx="1.300" fill="#b0d0ad"/>`).join('')}</svg><input type="range" min="0" max="8" value="0" aria-label="Playback position"></div>
    <footer><span class="len">0:08</span><time>4:37 pm</time>${TICKS}</footer></div></div>`);
  }
});

customElements.define('chat-composer', class extends HTMLElement{
  constructor(){ super(); mount(this, `<style>
    :host{display:block;height:24px;overflow:hidden;background:#f0f2f5}
    form{display:flex;align-items:center;height:64px;box-sizing:border-box;padding:0 26px 0 8px}
    button{flex:none;border:0;padding:0;background:none;height:26px;width:26px}
    input{flex:1;min-width:0;height:42px;box-sizing:border-box;margin:0 18px 0 64px;border:0;border-radius:8px;background:#fff;padding:0 12px 6px;font:16px/20px "DejaVu Sans",sans-serif;color:#111b21;outline:0}
  </style><form><button type="button" aria-label="Emoji"><svg width="26" height="26" viewBox="0 0 26 26"><circle cx="13" cy="14" r="11.500" fill="none" stroke="#54656f" stroke-width="2"/></svg></button>
  <input aria-label="Type a message" value="ا">
  <button type="button" aria-label="Voice message"><svg width="26" height="26" viewBox="0 0 26 26"><rect x="9" y="3" width="7" height="14" rx="3.500" fill="#54656f"/></svg></button></form>`); }
});
</script>
</body>
</html>
